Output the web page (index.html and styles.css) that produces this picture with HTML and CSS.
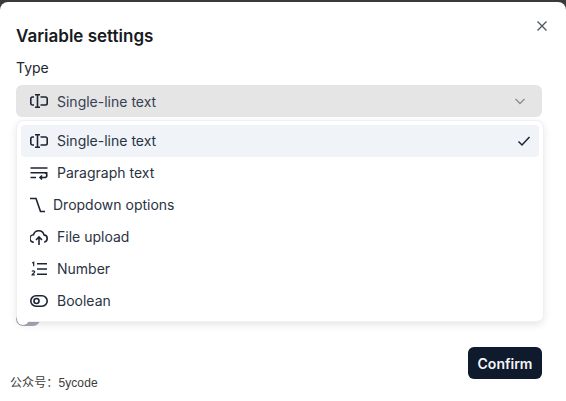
FILE: index.html
```html
<!DOCTYPE html>
<html>
<head>
    <title>Variable settings</title>
    <link rel="stylesheet" href="styles.css">
</head>
<body>
    <div class="modal">
        <svg class="close" width="16" height="16" viewBox="0 0 16 16"><path d="M3.500 3.500l9 9M12.500 3.500l-9 9"/></svg>
        <h2>Variable settings</h2>
        <label class="field-label">Type</label>
        <div class="select-wrap">
            <div class="select">
                <svg class="icon" viewBox="0 0 18 18"><path d="M4 5H2.500A1.700 1.700 0 0 0 .8 6.700v4.600A1.700 1.700 0 0 0 2.500 13H4M10.500 5h5a1.700 1.700 0 0 1 1.700 1.700v4.600a1.700 1.700 0 0 1-1.700 1.700h-5M5 2.800h5M5 15.200h5M7.500 2.800v12.400"/></svg>
                <span class="select-text">Single-line text</span>
                <svg class="chevron" width="16" height="16" viewBox="0 0 16 16"><path d="M3.500 6l4.500 4.500L12.500 6"/></svg>
            </div>
            <div class="menu">
                <div class="item selected">
                    <svg class="icon" viewBox="0 0 18 18"><path d="M4 5H2.500A1.700 1.700 0 0 0 .8 6.700v4.600A1.700 1.700 0 0 0 2.500 13H4M10.500 5h5a1.700 1.700 0 0 1 1.700 1.700v4.600a1.700 1.700 0 0 1-1.700 1.700h-5M5 2.800h5M5 15.200h5M7.500 2.800v12.400"/></svg>
                    <span class="item-text">Single-line text</span>
                    <svg class="check" width="16" height="16" viewBox="0 0 16 16"><path d="M2.500 8.500l3.500 3.500 7.500-8"/></svg>
                </div>
                <div class="item">
                    <svg class="icon" viewBox="0 0 18 18"><path d="M.5 4h17M.5 8.800h17M.5 13.500H6M10 13.500h4.500a2.350 2.350 0 0 0 0-4.700M12 11.500l-2 2 2 2"/></svg>
                    <span class="item-text">Paragraph text</span>
                </div>
                <div class="item">
                    <svg class="icon-small" viewBox="0 0 15 18"><path d="M0 2.500h6L10.500 15.500H15"/></svg>
                    <span class="item-text">Dropdown options</span>
                </div>
                <div class="item">
                    <svg class="icon" viewBox="0 0 18 18"><path d="M3.800 14.200A3.700 3.700 0 0 1 3.500 6.800 5.400 5.400 0 0 1 14 6.900a3.700 3.700 0 0 1 .2 7.300M9 17V9.500M6 12l3-3 3 3"/></svg>
                    <span class="item-text">File upload</span>
                </div>
                <div class="item">
                    <svg class="icon" viewBox="0 0 18 18"><path d="M7 3.800h10M7 9h10M7 14.200h10"/><path class="digits" d="M2.200 3l1.500-.8v4M2 11.500c.4-1 2.700-1 2.700.4 0 1-2.700 1.600-2.700 3h2.800"/></svg>
                    <span class="item-text">Number</span>
                </div>
                <div class="item">
                    <svg class="icon" viewBox="0 0 18 18"><rect x=".8" y="3.800" width="16.400" height="10.400" rx="5.200"/><circle cx="6.500" cy="9" r="2.500"/></svg>
                    <span class="item-text">Boolean</span>
                </div>
            </div>
        </div>
        <div class="toggle"></div>
        <div class="footer">
            <button class="confirm">Confirm</button>
        </div>
    </div>
    <div class="watermark">公众号：5ycode</div>
</body>
</html>
```

FILE: styles.css
```css
html, body {
    margin: 0;
    height: 100%;
    overflow: hidden;
}

body {
    background: #3a3a3a;
    font-family: Inter, "Noto Sans", sans-serif;
    color: #2a3342;
    position: relative;
}

.modal {
    position: relative;
    box-sizing: border-box;
    height: 399px;
    margin-top: 2px;
    padding: 23px 24px 0 16px;
    background: #fff;
    border-radius: 8px 8px 0 0;
}

.close {
    position: absolute;
    top: 16px;
    right: 16px;
    fill: none;
    stroke: #4b5563;
    stroke-width: 1.300;
}

h2 {
    margin: 0;
    font-size: 17px;
    line-height: 22px;
    font-weight: 600;
    color: #171a21;
}

.field-label {
    display: block;
    margin-top: 11px;
    font-size: 14px;
    line-height: 20px;
    font-weight: 400;
    color: #22262e;
}

.select-wrap {
    position: relative;
    margin-top: 7px;
}

.select {
    display: flex;
    align-items: center;
    height: 32px;
    padding: 0 14px;
    background: #e5e5e5;
    border-radius: 6px;
    font-size: 14px;
}

.select-text {
    flex: 1;
    margin-left: 9px;
    color: #374151;
}

.icon, .icon-small {
    flex: none;
    fill: none;
    stroke: #1c2434;
    stroke-width: 1.600;
    width: 18px;
    height: 18px;
}

.icon-small {
    width: 15px;
}

.digits {
    stroke-width: 1.200;
}

.chevron {
    fill: none;
    stroke: #8b8f96;
    stroke-width: 1.400;
}

.menu {
    position: absolute;
    top: 36px;
    left: 1px;
    right: -1px;
    padding: 4px;
    background: #fff;
    border-radius: 6px;
    box-shadow: 0 0 0 1px #eef0f2, 0 3px 8px rgba(0,0,0,0.12);
}

.item {
    display: flex;
    align-items: center;
    height: 32px;
    padding: 0 7px 0 9px;
    font-size: 14px;
    border-radius: 4px;
}

.item.selected {
    background: #f0f3f8;
}

.item-text {
    flex: 1;
    margin-left: 9px;
    margin-bottom: 2px;
}

.icon-small + .item-text {
    margin-left: 8px;
}

.check {
    fill: none;
    stroke: #1c2434;
    stroke-width: 1.500;
}

.toggle {
    width: 24px;
    height: 14px;
    margin-top: 195px;
    background: #a6a8b5;
    border-radius: 7px;
}

.toggle::before {
    content: "";
    display: block;
    width: 12px;
    height: 12px;
    margin: 0 1px;
    position: relative;
    top: 1px;
    background: #fff;
    border-radius: 50%;
}

.footer {
    display: flex;
    justify-content: flex-end;
    margin-top: 21px;
}

.confirm {
    width: 74px;
    height: 32px;
    padding: 0;
    border: none;
    border-radius: 6px;
    background: #101a2d;
    color: #f4f5f7;
    font-family: Inter, sans-serif;
    font-size: 14px;
    font-weight: 600;
}

.watermark {
    position: absolute;
    left: 10px;
    top: 375px;
    font-family: "Liberation Sans", "Noto Sans CJK SC", sans-serif;
    font-size: 12px;
    line-height: 16px;
    letter-spacing: 0.100px;
    color: #3b3b3b;
}
```
